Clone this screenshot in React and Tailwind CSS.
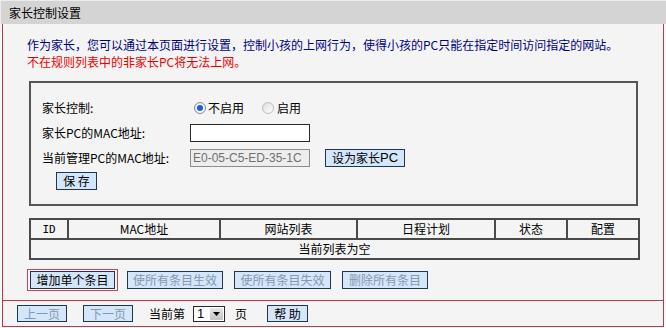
export default function App() {
  const btn =
    "h-[18px] bg-[#d3e6fa] border border-[#1f3550] flex items-center justify-center text-[12px] leading-none";
  return (
    <div className="w-[666px] h-[328px] bg-[#f8f8f8] overflow-hidden text-[12px] leading-none text-black font-['Noto_Sans_CJK_SC',sans-serif]">
      <div className="h-[24px] bg-[#d4d4d4] flex items-center pl-[8px] text-[12px] border-t border-l border-[#ececec]">
        家长控制设置
      </div>
      <div className="ml-[2px] w-[662px] border-x border-[#b53a4a] bg-[#f4f4f4]">
        <div className="pt-[12px] pl-[24px] pr-[20px] pb-[9px]">
          <div className="leading-[17px] text-[#000080] whitespace-nowrap">
            作为家长，您可以通过本页面进行设置，控制小孩的上网行为，使得小孩的PC只能在指定时间访问指定的网站。
          </div>
          <div className="leading-[17px] text-[#f00000] whitespace-nowrap">
            不在规则列表中的非家长PC将无法上网。
          </div>

          <div className="mt-[11px] ml-[2px] w-[609px] border-2 border-[#555555] px-[11px] pt-[12px] pb-[14px]">
            <div className="flex items-center h-[25px]">
              <div className="w-[148px]">家长控制:</div>
              <div className="flex items-center">
                <span className="ml-[4px] w-[12px] h-[12px] rounded-full border border-[#7d8ea5] bg-gradient-to-br from-[#dfe6ee] to-white flex items-center justify-center">
                  <span className="w-[6px] h-[6px] rounded-full bg-[#1d5fd0]" />
                </span>
                <span className="ml-[2px]">不启用</span>
                <span className="ml-[18px] w-[12px] h-[12px] rounded-full border border-[#bcbcbc] bg-gradient-to-br from-[#dedede] to-white" />
                <span className="ml-[3px]">启用</span>
              </div>
            </div>
            <div className="flex items-center h-[25px]">
              <div className="w-[148px]">家长PC的MAC地址:</div>
              <div className="w-[120px] h-[18px] bg-white border border-[#2a2a2a]" />
            </div>
            <div className="flex items-center h-[25px]">
              <div className="w-[148px]">当前管理PC的MAC地址:</div>
              <div className="w-[120px] h-[18px] bg-[#ededed] border border-[#8c8c8c] flex items-center pl-[2px] text-[12px] text-[#707070] font-['Liberation_Sans',sans-serif]">
                E0-05-C5-ED-35-1C
              </div>
              <div className={btn + " ml-[15px] w-[80px]"}>
                设为家长<span className="font-['Liberation_Sans',sans-serif] text-[13px]">PC</span>
              </div>
            </div>
            <div className="mt-[2px] pl-[14px]">
              <div className={btn + " w-[41px]"}>保&nbsp;存</div>
            </div>
          </div>

          <table className="mt-[12px] ml-[2px] w-[609px] table-fixed border-collapse border-2 border-[#4a4a4a]">
            <colgroup>
              <col className="w-[38px]" />
              <col className="w-[152px]" />
              <col className="w-[137px]" />
              <col className="w-[138px]" />
              <col className="w-[72px]" />
              <col className="w-[72px]" />
            </colgroup>
            <tbody>
              <tr className="h-[20px]">
                <td className="border-2 border-[#4a4a4a] text-center p-0 font-['DejaVu_Sans_Mono',monospace] text-[11px]">ID</td>
                <td className="border-2 border-[#4a4a4a] text-center p-0">MAC地址</td>
                <td className="border-2 border-[#4a4a4a] text-center p-0">网站列表</td>
                <td className="border-2 border-[#4a4a4a] text-center p-0">日程计划</td>
                <td className="border-2 border-[#4a4a4a] text-center p-0">状态</td>
                <td className="border-2 border-[#4a4a4a] text-center p-0">配置</td>
              </tr>
              <tr className="h-[20px]">
                <td colSpan={6} className="border-2 border-[#4a4a4a] text-center p-0">
                  当前列表为空
                </td>
              </tr>
            </tbody>
          </table>

          <div className="mt-[9px] flex items-center">
            <div className="border border-[#d0404f] px-[2px] py-[1px]">
              <div className={btn + " w-[85px]"}>增加单个条目</div>
            </div>
            <div className={btn + " ml-[9px] w-[96px] text-[#8498b0]"}>使所有条目生效</div>
            <div className={btn + " ml-[11px] w-[97px] text-[#8498b0]"}>使所有条目失效</div>
            <div className={btn + " ml-[11px] w-[86px] text-[#8498b0]"}>删除所有条目</div>
          </div>
        </div>

        <div className="h-[27px] border-y border-[#b53a4a] flex items-center pl-[14px]">
          <div className="h-[17px] w-[50px] bg-[#d3e6fa] border border-[#1f3550] flex items-center justify-center text-[#8498b0]">上一页</div>
          <div className="ml-[16px] h-[17px] w-[50px] bg-[#d3e6fa] border border-[#1f3550] flex items-center justify-center text-[#8498b0]">下一页</div>
          <div className="ml-[16px]">当前第</div>
          <div className="ml-[8px] h-[16px] w-[32px] border border-[#2a2a2a] bg-white flex">
            <div className="flex-1 flex items-center pl-[3px] text-[13px] font-['Liberation_Sans',sans-serif]">1</div>
            <div className="w-[15px] bg-gradient-to-b from-[#e6e6e6] to-[#c4c4c4] border border-white flex items-center justify-center">
              <svg width="7" height="4" viewBox="0 0 7 4">
                <path d="M0 0 H7 L3.5 4 Z" fill="#000" />
              </svg>
            </div>
          </div>
          <div className="ml-[10px]">页</div>
          <div className="ml-[20px] h-[17px] w-[41px] bg-[#d3e6fa] border border-[#1f3550] flex items-center justify-center">帮&nbsp;助</div>
        </div>
      </div>
    </div>
  );
}
